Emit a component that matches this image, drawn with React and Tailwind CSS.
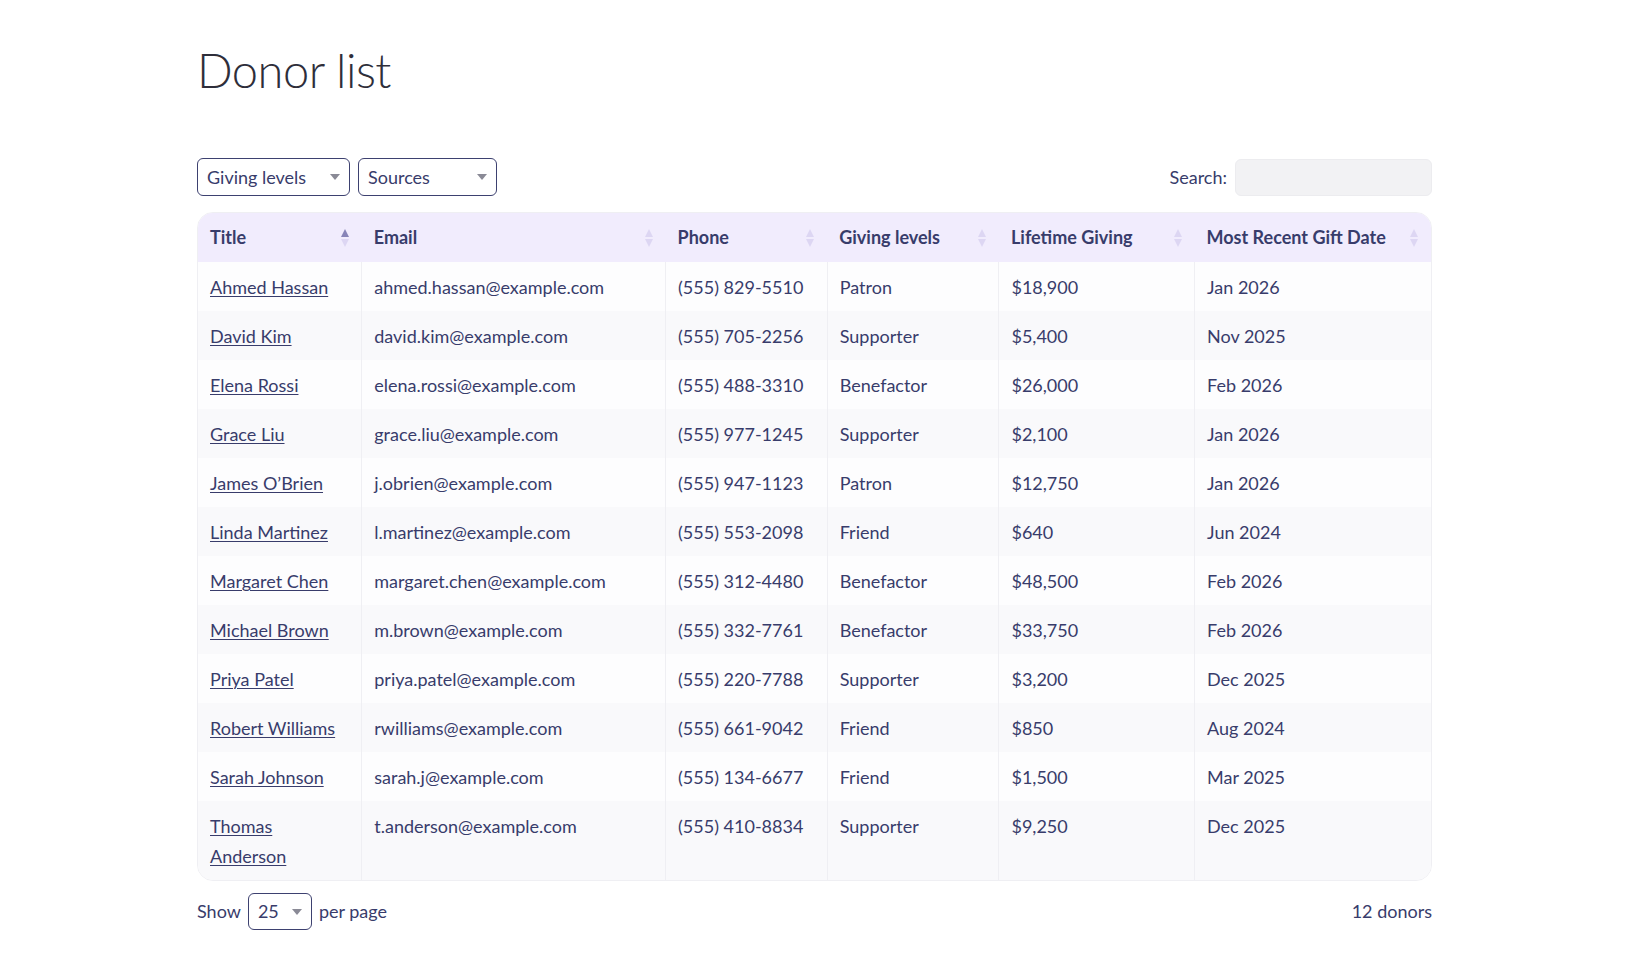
import React from "react";

const rows = [
  ["Ahmed Hassan","ahmed.hassan@example.com","(555) 829-5510","Patron","$18,900","Jan 2026"],
  ["David Kim","david.kim@example.com","(555) 705-2256","Supporter","$5,400","Nov 2025"],
  ["Elena Rossi","elena.rossi@example.com","(555) 488-3310","Benefactor","$26,000","Feb 2026"],
  ["Grace Liu","grace.liu@example.com","(555) 977-1245","Supporter","$2,100","Jan 2026"],
  ["James O’Brien","j.obrien@example.com","(555) 947-1123","Patron","$12,750","Jan 2026"],
  ["Linda Martinez","l.martinez@example.com","(555) 553-2098","Friend","$640","Jun 2024"],
  ["Margaret Chen","margaret.chen@example.com","(555) 312-4480","Benefactor","$48,500","Feb 2026"],
  ["Michael Brown","m.brown@example.com","(555) 332-7761","Benefactor","$33,750","Feb 2026"],
  ["Priya Patel","priya.patel@example.com","(555) 220-7788","Supporter","$3,200","Dec 2025"],
  ["Robert Williams","rwilliams@example.com","(555) 661-9042","Friend","$850","Aug 2024"],
  ["Sarah Johnson","sarah.j@example.com","(555) 134-6677","Friend","$1,500","Mar 2025"],
  ["Thomas Anderson","t.anderson@example.com","(555) 410-8834","Supporter","$9,250","Dec 2025"],
];
const heads = [["Title",164],["Email",304],["Phone",162],["Giving levels",172],["Lifetime Giving",196],["Most Recent Gift Date",237]];

function Sort({ active }) {
  return (
    <svg width="10" height="20" viewBox="0 0 10 20" className="shrink-0">
      <path d="M5 1 L9 9 L1 9 Z" fill={active ? "#8884b8" : "#ddd6f3"} />
      <path d="M5 19 L9 11 L1 11 Z" fill="#ddd6f3" />
    </svg>
  );
}
function Caret() {
  return <svg width="10" height="6" viewBox="0 0 10 6"><path d="M0 0 L10 0 L5 6 Z" fill="#8a8a96" /></svg>;
}

export default function App() {
  return (
    <div className="min-h-screen bg-white text-[#383c6b]" style={{ fontFamily: "Lato, 'Open Sans', sans-serif" }}>
      <div className="w-[1235px] ml-[197px] pt-[40px]">
        <h1 className="text-[47px] font-light text-[#2e2e3a] leading-[60px] tracking-[-0.5px]">Donor list</h1>
        <div className="flex items-center justify-between mt-[58px] mb-[16px]">
          <div className="flex gap-[8px]">
            <div className="flex items-center justify-between w-[153px] h-[38px] border border-[#3d4170] rounded-[6px] px-[9px] text-[18px]"><span>Giving levels</span><Caret /></div>
            <div className="flex items-center justify-between w-[139px] h-[38px] border border-[#3d4170] rounded-[6px] px-[9px] text-[18px]"><span>Sources</span><Caret /></div>
          </div>
          <div className="flex items-center gap-[8px] text-[18px]">
            <span>Search:</span>
            <div className="w-[197px] h-[37px] rounded-[6px] bg-[#f2f2f4] border border-[#ececef]" />
          </div>
        </div>
        <div className="border border-[#efeff3] rounded-[16px] overflow-hidden">
          <table className="w-full border-collapse text-[18px]">
            <thead>
              <tr className="bg-[#f1ecfd] h-[49px]">
                {heads.map(([h, w], i) => (
                  <th key={h} style={{ width: w }} className="text-left font-bold px-[12px]">
                    <div className="flex items-center justify-between"><span>{h}</span><Sort active={i === 0} /></div>
                  </th>
                ))}
              </tr>
            </thead>
            <tbody>
              {rows.map((r, i) => (
                <tr key={r[0]} className={i % 2 ? "bg-[#f9f9fb]" : "bg-[#fdfdfe]"}>
                  {r.map((c, j) => (
                    <td key={j} className={"align-top px-[12px] pt-[10px] pb-[9px] leading-[30px] " + (j < 5 ? "border-r border-[#efeff3]" : "")}>
                      {j === 0 ? <a className="underline underline-offset-2 decoration-1">{c === "Thomas Anderson" ? <>Thomas<br />Anderson</> : c}</a> : c}
                    </td>
                  ))}
                </tr>
              ))}
            </tbody>
          </table>
        </div>
        <div className="flex items-center justify-between mt-[12px] text-[18px]">
          <div className="flex items-center gap-[7px]">
            <span>Show</span>
            <div className="flex items-center justify-between w-[64px] h-[37px] border border-[#3d4170] rounded-[6px] px-[9px]"><span>25</span><Caret /></div>
            <span>per page</span>
          </div>
          <span>12 donors</span>
        </div>
      </div>
    </div>
  );
}
